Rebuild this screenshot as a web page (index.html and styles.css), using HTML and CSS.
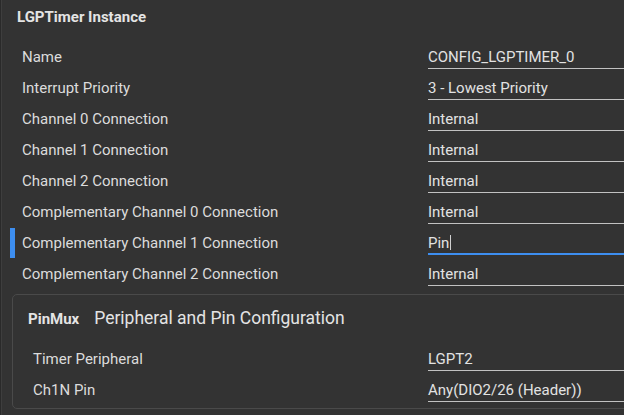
FILE: index.html
```html
<!DOCTYPE html>
<html lang="en">
<head>
    <meta charset="UTF-8">
    <meta name="viewport" content="width=device-width, initial-scale=1.0">
    <title>LGPTimer Instance</title>
    <link rel="stylesheet" href="styles.css">
</head>
<body>
<div class="page">
    <h2 class="instance-title">LGPTimer Instance</h2>

    <div class="config-list">
        <div class="config-row">
            <span class="config-label">Name</span>
            <span class="config-value">CONFIG_LGPTIMER_0</span>
        </div>
        <div class="config-row">
            <span class="config-label">Interrupt Priority</span>
            <span class="config-value">3 - Lowest Priority</span>
        </div>
        <div class="config-row">
            <span class="config-label">Channel 0 Connection</span>
            <span class="config-value">Internal</span>
        </div>
        <div class="config-row">
            <span class="config-label">Channel 1 Connection</span>
            <span class="config-value">Internal</span>
        </div>
        <div class="config-row">
            <span class="config-label">Channel 2 Connection</span>
            <span class="config-value">Internal</span>
        </div>
        <div class="config-row">
            <span class="config-label">Complementary Channel 0 Connection</span>
            <span class="config-value">Internal</span>
        </div>
        <div class="config-row active">
            <span class="config-label">Complementary Channel 1 Connection</span>
            <span class="config-value">Pin<span class="caret"></span></span>
        </div>
        <div class="config-row">
            <span class="config-label">Complementary Channel 2 Connection</span>
            <span class="config-value">Internal</span>
        </div>
    </div>

    <div class="pinmux-card">
        <div class="pinmux-header">
            <span class="pinmux-tag">PinMux</span>
            <span class="pinmux-title">Peripheral and Pin Configuration</span>
        </div>
        <div class="config-list card-list">
            <div class="config-row">
                <span class="config-label">Timer Peripheral</span>
                <span class="config-value">LGPT2</span>
            </div>
            <div class="config-row">
                <span class="config-label">Ch1N Pin</span>
                <span class="config-value">Any(DIO2/26 (Header))</span>
            </div>
        </div>
    </div>
</div>
</body>
</html>
```

FILE: styles.css
```css
html, body {
    margin: 0;
    padding: 0;
    height: 100%;
    background-color: #333333;
    overflow: hidden;
}
body {
    font-family: Roboto, "Liberation Sans", Arial, sans-serif;
    font-size: 15px;
    color: #dcdcdc;
    border-left: 1px solid #2a2a2a;
    box-shadow: inset 1px 0 #3e3e3e;
}
.page {
    width: 660px;
}
.instance-title {
    margin: 0;
    padding: 7px 0 0 16px;
    font-size: 15px;
    font-weight: bold;
    line-height: 20px;
    color: #e4e4e4;
}
.config-list {
    margin-top: 15px;
    padding-left: 21px;
}
.config-row {
    position: relative;
    display: grid;
    grid-template-columns: 406px 1fr;
    height: 31px;
}
.config-label {
    padding-top: 5px;
    line-height: 20px;
}
.config-value {
    height: 27px;
    box-sizing: border-box;
    padding-top: 5px;
    line-height: 20px;
    border-bottom: 1px solid #c2c2c2;
    color: #e2e2e2;
}
.config-row.active::before {
    content: "";
    position: absolute;
    left: -12px;
    top: 0;
    width: 5px;
    height: 30px;
    background-color: #3d8ef0;
}
.config-row.active .config-value {
    border-bottom: 2px solid #3d8ef0;
}
.caret {
    display: inline-block;
    width: 1px;
    height: 15px;
    margin-left: 1px;
    vertical-align: -2px;
    background-color: #d0d0d0;
}
.pinmux-card {
    margin: 4px 0 0 11px;
    border: 1px solid #4a4a4a;
    border-radius: 5px;
    padding: 11px 0 2px 0;
}
.pinmux-header {
    padding-left: 15px;
    line-height: 24px;
    display: flex;
    align-items: baseline;
}
.pinmux-tag {
    font-size: 15px;
    font-weight: bold;
    color: #e4e4e4;
    margin-right: 15px;
}
.pinmux-title {
    font-size: 17.5px;
    color: #e4e4e4;
}
.card-list {
    margin-top: 13px;
    padding-left: 20px;
}
.card-list .config-row {
    grid-template-columns: 395px 1fr;
}
```
